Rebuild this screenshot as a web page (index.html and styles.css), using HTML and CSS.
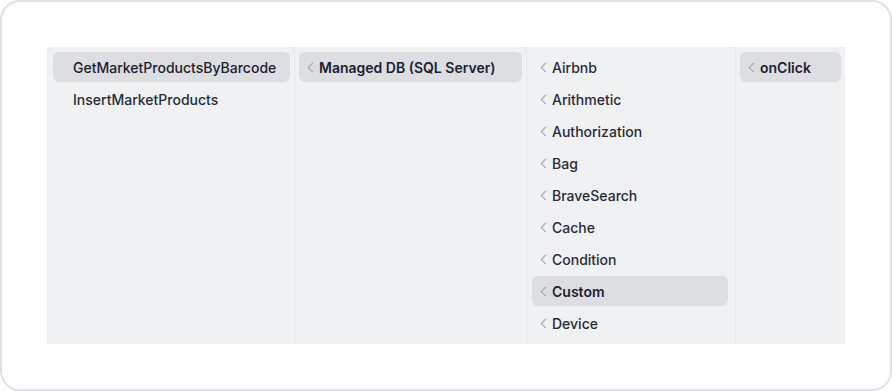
FILE: index.html
```html
<!DOCTYPE html>
<html lang="en">
<head>
  <meta charset="UTF-8" />
  <meta name="viewport" content="width=device-width, initial-scale=1.0" />
  <title>Action Browser</title>
  <link rel="stylesheet" href="styles.css">
</head>
<body>
  <div class="card">
    <div class="browser">
      <div class="column col-ops">
        <div class="item active"><span class="chev hidden"></span><span>GetMarketProductsByBarcode</span></div>
        <div class="item"><span class="chev hidden"></span><span>InsertMarketProducts</span></div>
      </div>

      <div class="column col-source">
        <div class="item active"><span class="chev"></span><span>Managed DB (SQL Server)</span></div>
      </div>

      <div class="column col-groups">
        <div class="item"><span class="chev"></span><span>Airbnb</span></div>
        <div class="item"><span class="chev"></span><span>Arithmetic</span></div>
        <div class="item"><span class="chev"></span><span>Authorization</span></div>
        <div class="item"><span class="chev"></span><span>Bag</span></div>
        <div class="item"><span class="chev"></span><span>BraveSearch</span></div>
        <div class="item"><span class="chev"></span><span>Cache</span></div>
        <div class="item"><span class="chev"></span><span>Condition</span></div>
        <div class="item active"><span class="chev"></span><span>Custom</span></div>
        <div class="item"><span class="chev"></span><span>Device</span></div>
      </div>

      <div class="column col-events">
        <div class="item active"><span class="chev"></span><span>onClick</span></div>
      </div>
    </div>
  </div>
</body>
</html>
```

FILE: styles.css
```css
* {
  margin: 0;
  padding: 0;
  box-sizing: border-box;
}

body {
  font-family: Inter, "Noto Sans", sans-serif;
  background: #ffffff;
  width: 892px;
  height: 391px;
  overflow: hidden;
}

.card {
  width: 892px;
  height: 391px;
  border: 2px solid #e0e2e6;
  border-radius: 20px;
  background: #ffffff;
  padding: 45px;
}

.browser {
  display: flex;
  height: 297px;
  background: #f0f1f3;
  overflow: hidden;
}

.column {
  display: flex;
  flex-direction: column;
  gap: 2px;
  padding: 5px 4px 5px 5px;
  border-right: 1px solid #e4e6e9;
}

.col-ops { width: 248px; padding-left: 6px; }
.col-source { width: 232px; padding-left: 4px; }
.col-groups { width: 209px; padding-right: 7px; }
.col-events { width: 109px; padding-left: 4px; border-right: none; }

.item {
  display: flex;
  align-items: center;
  gap: 6px;
  height: 30px;
  padding-left: 8px;
  border-radius: 6px;
  font-size: 14px;
  font-weight: 500;
  color: #272c38;
  white-space: nowrap;
}

.item.active {
  background: #dcdee2;
  font-weight: 600;
  color: #1c2130;
}

.col-ops .item.active {
  font-weight: 500;
}

.chev {
  width: 6px;
  height: 10px;
  flex: none;
  position: relative;
}

.chev::before {
  content: "";
  position: absolute;
  left: 2px;
  top: 2px;
  width: 6px;
  height: 6px;
  border-left: 1.4px solid #9ba1ab;
  border-bottom: 1.4px solid #9ba1ab;
  transform: rotate(45deg);
}

.chev.hidden::before {
  display: none;
}
```
